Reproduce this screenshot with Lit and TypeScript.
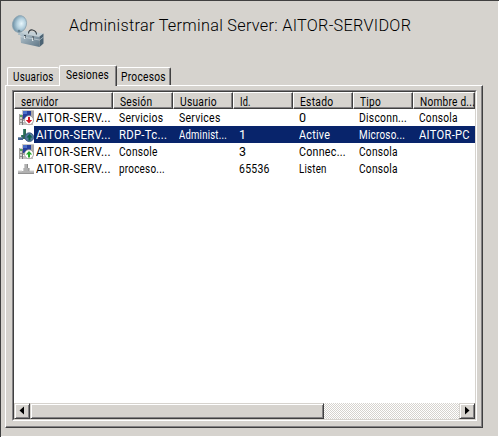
import { LitElement, html, css, svg } from "lit";
import { customElement, property } from "lit/decorators.js";

/** A single-line label whose glyphs are condensed or widened to a given width. */
@customElement("fit-label")
class FitLabel extends LitElement {
  @property() text = "";
  @property({ type: Number }) width = 0;
  static styles = css`
    :host { display: inline-block; white-space: pre; }
    span { display: inline-block; transform-origin: 0 50%; letter-spacing: .3px; }
  `;
  render() { return html`<span>${this.text}</span>`; }
  updated() {
    const span = this.renderRoot.querySelector("span") as HTMLElement;
    if (this.width && this.text) {
      span.style.transform = `scaleX(${this.width / span.offsetWidth})`;
    }
  }
}

type Cell = [string, number];
const head: Cell[] = [["servidor", 37], ["Sesión", 32], ["Usuario", 37], ["Id.", 11], ["Estado", 33], ["Tipo", 21], ["Nombre d...", 55]];
const server: Cell = ["AITOR-SERV...", 75];
const none: Cell = ["", 0];
const rows: { icon: string; selected?: boolean; cells: Cell[] }[] = [
  { icon: "down", cells: [server, ["Servicios", 44], ["Services", 42], none, ["0", 7], ["Disconn...", 48], ["Consola", 39]] },
  { icon: "link", selected: true, cells: [server, ["RDP-Tc...", 48], ["Administ...", 48], ["1", 7], ["Active", 31], ["Microso...", 46], ["AITOR-PC", 51]] },
  { icon: "up", cells: [server, ["Console", 39], none, ["3", 7], ["Connec...", 47], ["Consola", 39], none] },
  { icon: "listen", cells: [server, ["proceso...", 46], none, ["65536", 31], ["Listen", 28], ["Consola", 39], none] },
];

const computer = svg`
  <rect x="4" y="0" width="12" height="10" fill="#cbc8c3"/>
  <rect x="5" y="1" width="8" height="8" fill="#27409c"/>
  <path d="M5 1h4v3h-4z" fill="#4b70c9"/>
  <path d="M13 1h3v10h-3zM5 9h9v2h-9z" fill="#aaa8a8"/>
  <path d="M5 12h10v3H5z" fill="#c3c1bf"/>
  <rect x="1" y="4" width="4" height="11" fill="#d2d0cc"/>
  <path d="M1 4h1v11H1z" fill="#a2a19e"/>
  <path d="M4 5h1v10H4z" fill="#77777c"/>
  <rect x="2" y="5" width="2" height="2" fill="#55aa5c"/>
  <path d="M2 9h2v1H2zM2 12h2v1H2z" fill="#8d8d8b"/>`;

const icons: Record<string, unknown> = {
  down: svg`${computer}
    <circle cx="11" cy="10.2" r="4.5" fill="#fff" stroke="#9a9593" stroke-width=".8"/>
    <path d="M10 7h2v3h2.2L11 13.6 7.8 10H10z" fill="#d51427"/>`,
  up: svg`${computer}
    <circle cx="11" cy="10.2" r="4.5" fill="#fff" stroke="#9a9593" stroke-width=".8"/>
    <path d="M10 13.6h2v-3h2.2L11 7 7.8 10.6H10z" fill="#24a52c"/>`,
  link: svg`
    <path d="M5 2h3v5h2v5H3V8h2z" fill="#2d6b52"/>
    <path d="M5 2h1v6H5zM3 8h1v4H3z" fill="#438779"/>
    <path d="M0 10h5v3H0z" fill="#456493"/>
    <path d="M0 10h4v1H0z" fill="#7d93a8"/>
    <circle cx="11.3" cy="10.2" r="4.4" fill="#527b9b" stroke="#344e7d" stroke-width=".8"/>
    <path d="M10.5 13.5h2v-3h2L11.5 7l-3 3.5h2z" fill="#0c6148"/>`,
  listen: svg`
    <path d="M6.500 3h3v4H11v4H5V7h1.500z" fill="#b0b0b0"/>
    <path d="M6 3h1v4H6zM5 7h1v3H5z" fill="#ccc"/>
    <path d="M9 3h1v4H9zM10.500 7h1v3h-1z" fill="#8a8a8a"/>
    <path d="M0 10h16v2H0z" fill="#b1b1b1"/>
    <path d="M0 9.500h4v1H0zM12 9.500h4v1h-4z" fill="#d2d2d2"/>
    <path d="M0 12h16v1H0z" fill="#929292"/>`,
};

@customElement("app-root")
class AppRoot extends LitElement {
  static styles = css`
    :host {
      display: block; box-sizing: border-box; width: 499px; height: 437px; overflow: hidden;
      background: #d4d0c8; border-top: 1px solid #404040; border-left: 1px solid #404040;
      font: 12.5px/17px Roboto, "Liberation Sans", sans-serif; color: #000;
    }
    .window { box-sizing: border-box; height: 436px; width: 498px; background: #d6d3ce; padding: 0 0 0 4px; border-right: 1px solid #fff; border-bottom: 1px solid #fff; }
    .banner { display: flex; height: 64px; }
    .logo { width: 36px; height: 34px; margin: 13px 0 0 6px; }
    .title { font: 300 17px/22px Roboto, "Liberation Sans", sans-serif; margin: 13px 0 0 22px; }
    .tabs { display: flex; align-items: flex-end; height: 20px; padding-left: 2px; }
    .tab {
      box-sizing: border-box; height: 18px; border: 1px solid #fff; border-right: 1px solid #404040;
      border-bottom: 0; border-radius: 2px 2px 0 0; box-shadow: inset -1px 0 #848284;
      padding: 1px 0 0 5px; line-height: 16px; background: #d6d3ce;
    }
    .users { width: 52px; border-right: 0; box-shadow: none; }
    .sessions { width: 58px; height: 21px; margin-bottom: -1px; z-index: 1; padding: 1px 0 0 6px; }
    .processes { width: 54px; border-left: 0; padding-left: 4px; }
    .panel {
      box-sizing: border-box; width: 478px; height: 343px; padding: 4px 4px 4px 6px;
      border: 1px solid #fff; border-right-color: #404040; border-bottom-color: #404040;
      box-shadow: inset -1px -1px #848284;
    }
    .sunken {
      box-sizing: border-box; width: 465px; height: 331px;
      border: 1px solid #848284; border-right-color: #fff; border-bottom-color: #fff;
    }
    .list {
      box-sizing: border-box; width: 463px; height: 329px; overflow: hidden;
      display: flex; flex-direction: column; background: #fff;
      border: 1px solid #404040; border-right-color: #d6d3ce; border-bottom-color: #d6d3ce;
    }
    .row { display: grid; grid-template-columns: 99px repeat(5, 60px) 62px; height: 17px; flex: none; line-height: 18px; }
    .head { background: #d6d3ce; }
    .head > div {
      box-sizing: border-box; height: 17px; padding-left: 6px; line-height: 17px; overflow: hidden;
      border: 1px solid #fff; border-right-color: #404040; border-bottom-color: #404040;
      box-shadow: inset -1px -1px #848284;
    }
    .cell { padding-left: 6px; height: 17px; white-space: nowrap; overflow: hidden; }
    .first { display: flex; height: 17px; padding-left: 4px; }
    .icon { width: 16px; height: 16px; margin-top: 1px; flex: none; }
    .server { flex: 1; padding-left: 2px; width: 0; }
    .selected .cell, .selected .server { background: #08246b; color: #fff; }
    .body { flex: 1; }
    .scroll { display: flex; height: 16px; flex: none; background: repeating-conic-gradient(#d6d3ce 0 25%, #fff 0 50%) 0 0 / 2px 2px; }
    .button {
      box-sizing: border-box; width: 16px; height: 16px; background: #d6d3ce;
      border: 1px solid #d6d3ce; border-right-color: #404040; border-bottom-color: #404040;
      box-shadow: inset 1px 1px #fff, inset -1px -1px #848284;
    }
    .thumb { width: 294px; }
    .track { flex: 1; }
    .arrow { display: block; width: 14px; height: 14px; }
  `;

  label([text, width]: Cell) {
    return html`<fit-label .text=${text} .width=${width}></fit-label>`;
  }

  render() {
    return html`<div class="window">
      <div class="banner">
        <svg class="logo" viewBox="0 0 36 34">
          <defs>
            <radialGradient id="dish" cx=".62" cy=".45" r=".6">
              <stop offset="0" stop-color="#e8f7fc"/><stop offset=".5" stop-color="#b4d0de"/><stop offset="1" stop-color="#6f92a6"/>
            </radialGradient>
            <linearGradient id="box" x2="1" y2="1">
              <stop offset="0" stop-color="#b8c8d1"/><stop offset="1" stop-color="#5f7686"/>
            </linearGradient>
          </defs>
          <path d="M8 16l3 1 2 4H7z" fill="#a7bac3"/>
          <ellipse cx="8.500" cy="10" rx="7" ry="8.500" transform="rotate(15 8.5 10)" fill="url(#dish)" stroke="#8da4b0" stroke-width=".7"/>
          <path d="M7 17l4 1" stroke="#7b929d" stroke-width=".8" fill="none"/>
          <circle cx="8" cy="17" r="1.300" fill="#688394"/>
          <path d="M9 19l5-2.500 18.500 3-4 3.500z" fill="#c3d0d6"/>
          <path d="M9 19l19.500 4v10L10 29z" fill="url(#box)"/>
          <path d="M28.500 22.500l4-3v10l-4 3.500z" fill="#4c6373"/>
          <path d="M9 22.500l19.500 3.500 4-3" stroke="#d2dce0" stroke-width=".6" fill="none"/>
          <path d="M17.500 19.500c0-3 2-4 4-3.500s4 1 4 4.500" stroke="#363d42" stroke-width="1.100" fill="none"/>
          <path d="M14 21v3M22 22.500v3.500" stroke="#3d4b55" stroke-width="2"/>
          <path d="M13.700 22v3M21.700 23.500v3.500" stroke="#e6edef" stroke-width="1.200"/>
        </svg>
        <div class="title">${this.label(["Administrar Terminal Server: AITOR-SERVIDOR", 342])}</div>
      </div>
      <div class="tabs">
        <div class="tab users">${this.label(["Usuarios", 41])}</div>
        <div class="tab sessions">${this.label(["Sesiones", 43])}</div>
        <div class="tab processes">${this.label(["Procesos", 45])}</div>
      </div>
      <div class="panel"><div class="sunken"><div class="list">
        <div class="row head">${head.map((c) => html`<div>${this.label(c)}</div>`)}</div>
        ${rows.map((r) => html`<div class="row ${r.selected ? "selected" : ""}">
          ${r.cells.map((c, i) => i === 0
            ? html`<div class="first"><svg class="icon" viewBox="0 0 16 16">${icons[r.icon]}</svg><div class="server">${this.label(c)}</div></div>`
            : html`<div class="cell">${this.label(c)}</div>`)}
        </div>`)}
        <div class="body"></div>
        <div class="scroll">
          <div class="button"><svg class="arrow" viewBox="0 0 14 14"><path d="M9 2.500v8L4.500 6.500z"/></svg></div>
          <div class="button thumb"></div>
          <div class="track"></div>
          <div class="button"><svg class="arrow" viewBox="0 0 14 14"><path d="M5 2.500v8l4.500-4z"/></svg></div>
        </div>
      </div></div></div>
    </div>`;
  }
}
